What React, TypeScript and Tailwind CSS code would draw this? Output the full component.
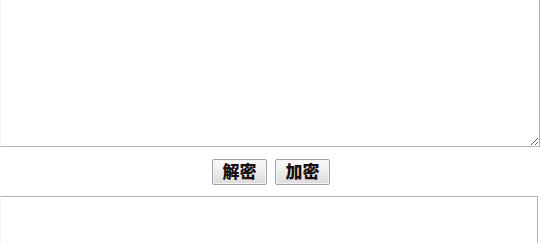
import React from 'react';

export default function App() {
  return (
    <div className="w-[540px] h-[243px] overflow-hidden bg-white" style={{ fontFamily: '"Liberation Sans", "Noto Sans CJK SC", sans-serif' }}>
      <textarea
        className="block w-[540px] h-[147px] border border-t-0 border-[#b4b4b4] border-l-[#f3f3f3] bg-white outline-none resize"
        defaultValue=""
      />
      <div className="flex justify-center gap-[8px] pt-[12px] pb-[11px] pl-[2px]">
        <button className="w-[55px] h-[26px] border border-[#a3a3a3] rounded-[2px] bg-gradient-to-b from-[#fbfbfb] to-[#dcdcdc] text-[17px] font-black text-[#1a1010] leading-none shadow-[inset_0_0_0_1px_#f4f4f4]">
          解密
        </button>
        <button className="w-[55px] h-[26px] border border-[#a3a3a3] rounded-[2px] bg-gradient-to-b from-[#fbfbfb] to-[#dcdcdc] text-[17px] font-black text-[#1a1010] leading-none shadow-[inset_0_0_0_1px_#f4f4f4]">
          加密
        </button>
      </div>
      <textarea
        className="block w-[538px] h-[120px] border border-[#b4b4b4] border-l-[#f3f3f3] bg-white outline-none resize-none"
        defaultValue=""
      />
    </div>
  );
}
